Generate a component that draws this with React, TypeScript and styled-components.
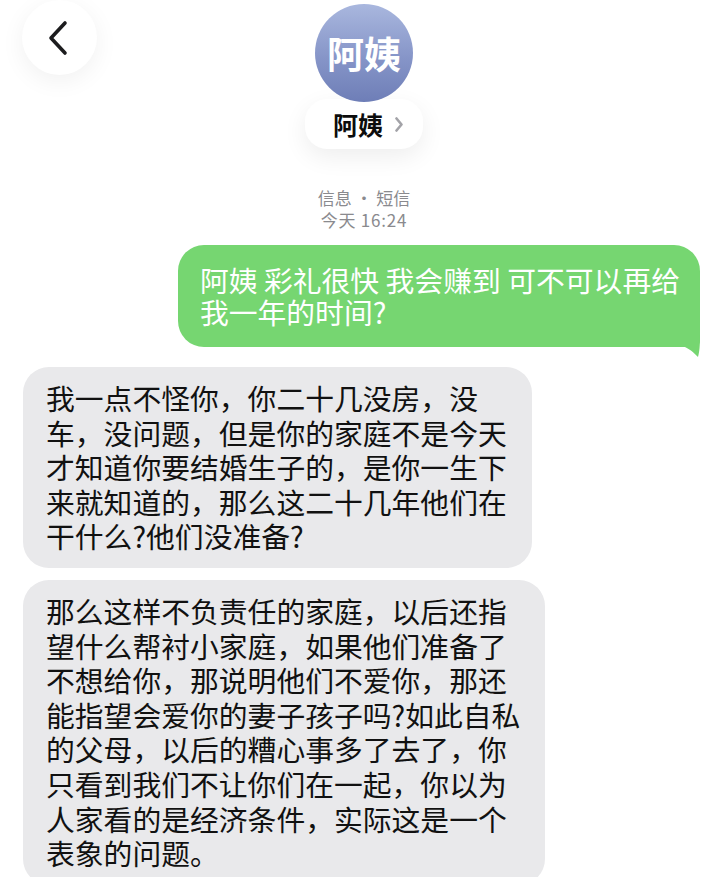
import styled, { createGlobalStyle } from "styled-components";

const GlobalStyle = createGlobalStyle`
  html, body {
    margin: 0;
    padding: 0;
    background: #ffffff;
    overflow: hidden;
  }
  body {
    font-family: "Noto Sans CJK SC", "Noto Sans", sans-serif;
    color: #111111;
  }
`;

const Page = styled.div`
  width: 704px;
  height: 877px;
  overflow: hidden;
  background: #ffffff;
`;

const Header = styled.header`
  display: grid;
  grid-template-columns: 120px 1fr 96px;
  align-items: start;
`;

const BackButton = styled.button`
  width: 75px;
  height: 75px;
  margin-left: 22px;
  padding: 0 4px 0 0;
  border: none;
  border-radius: 50%;
  background: #ffffff;
  box-shadow: 0 6px 24px rgba(0, 0, 0, 0.06);
  display: flex;
  align-items: center;
  justify-content: center;
  cursor: pointer;
`;

const Contact = styled.div`
  display: flex;
  flex-direction: column;
  align-items: center;
  padding-top: 4px;
`;

const Avatar = styled.div`
  position: relative;
  z-index: 1;
  width: 98px;
  height: 98px;
  border-radius: 50%;
  background: linear-gradient(180deg, #a9b7de 0%, #8695c8 55%, #6e7eb7 100%);
  color: #ffffff;
  font-size: 37px;
  font-weight: 700;
  display: flex;
  align-items: center;
  justify-content: center;
`;

const NamePill = styled.div`
  margin-top: -3px;
  height: 50px;
  padding: 0 20px 0 28px;
  border-radius: 22px;
  background: #ffffff;
  box-shadow: 0 8px 24px rgba(0, 0, 0, 0.07);
  display: flex;
  align-items: center;
  gap: 12px;
  font-size: 25px;
  font-weight: 700;
  color: #0c0c0c;
`;

const Meta = styled.div`
  margin-top: 38px;
  font-size: 17px;
  line-height: 22px;
  color: #8a8a8e;
  text-align: center;
`;

const MetaTime = styled.div`
  letter-spacing: 0.8px;
`;

const Thread = styled.main`
  display: flex;
  flex-direction: column;
  gap: 12px;
  padding: 14px 4px 0 23px;
`;

const Bubble = styled.div<{ $out?: boolean }>`
  position: relative;
  align-self: ${(p) => (p.$out ? "flex-end" : "flex-start")};
  margin-bottom: ${(p) => (p.$out ? "8px" : "0")};
  padding: ${(p) => (p.$out ? "19px 20px 19px 22px" : "14px 25px 14px 23px")};
  border-radius: ${(p) => (p.$out ? "26px 26px 6px 26px" : "26px")};
  background: ${(p) => (p.$out ? "#76d671" : "#e9e9eb")};
  color: ${(p) => (p.$out ? "#ffffff" : "#111111")};
  font-size: 28.8px;
  line-height: ${(p) => (p.$out ? "32px" : "34.6px")};
  white-space: nowrap;
`;

const Tail = styled.svg`
  position: absolute;
  right: 0;
  bottom: -10px;
  width: 30px;
  height: 40px;
`;

const outgoing = ["阿姨 彩礼很快 我会赚到 可不可以再给", "我一年的时间?"];

const incoming = [
  [
    "我一点不怪你，你二十几没房，没",
    "车，没问题，但是你的家庭不是今天",
    "才知道你要结婚生子的，是你一生下",
    "来就知道的，那么这二十几年他们在",
    "干什么?他们没准备?",
  ],
  [
    "那么这样不负责任的家庭，以后还指",
    "望什么帮衬小家庭，如果他们准备了",
    "不想给你，那说明他们不爱你，那还",
    "能指望会爱你的妻子孩子吗?如此自私",
    "的父母，以后的糟心事多了去了，你",
    "只看到我们不让你们在一起，你以为",
    "人家看的是经济条件，实际这是一个",
    "表象的问题。",
  ],
];

const Lines = ({ lines }: { lines: string[] }) => (
  <>
    {lines.map((line, i) => (
      <div key={i}>{line}</div>
    ))}
  </>
);

export default function App() {
  return (
    <Page>
      <GlobalStyle />
      <Header>
        <BackButton aria-label="返回">
          <svg width="24" height="36" viewBox="0 0 24 36" fill="none">
            <path
              d="M19 3 L5 18 L19 33"
              stroke="#1c1c1e"
              strokeWidth="3.6"
              strokeLinecap="round"
              strokeLinejoin="round"
            />
          </svg>
        </BackButton>
        <Contact>
          <Avatar>阿姨</Avatar>
          <NamePill>
            阿姨
            <svg width="8" height="15" viewBox="0 0 8 15" fill="none">
              <path
                d="M1.5 1.5 L6.5 7.5 L1.5 13.5"
                stroke="#a3a3a8"
                strokeWidth="2.6"
                strokeLinecap="round"
                strokeLinejoin="round"
              />
            </svg>
          </NamePill>
          <Meta>
            <div>信息 • 短信</div>
            <MetaTime>今天 16:24</MetaTime>
          </Meta>
        </Contact>
      </Header>
      <Thread>
        <Bubble $out>
          <Lines lines={outgoing} />
          <Tail viewBox="0 0 30 40">
            <path
              d="M0 0 H30 V18 C30 28 29.5 35 28 40 C24 36 20 31.5 13 29.5 L0 30 Z"
              fill="#76d671"
            />
          </Tail>
        </Bubble>
        {incoming.map((lines, i) => (
          <Bubble key={i}>
            <Lines lines={lines} />
          </Bubble>
        ))}
      </Thread>
    </Page>
  );
}
